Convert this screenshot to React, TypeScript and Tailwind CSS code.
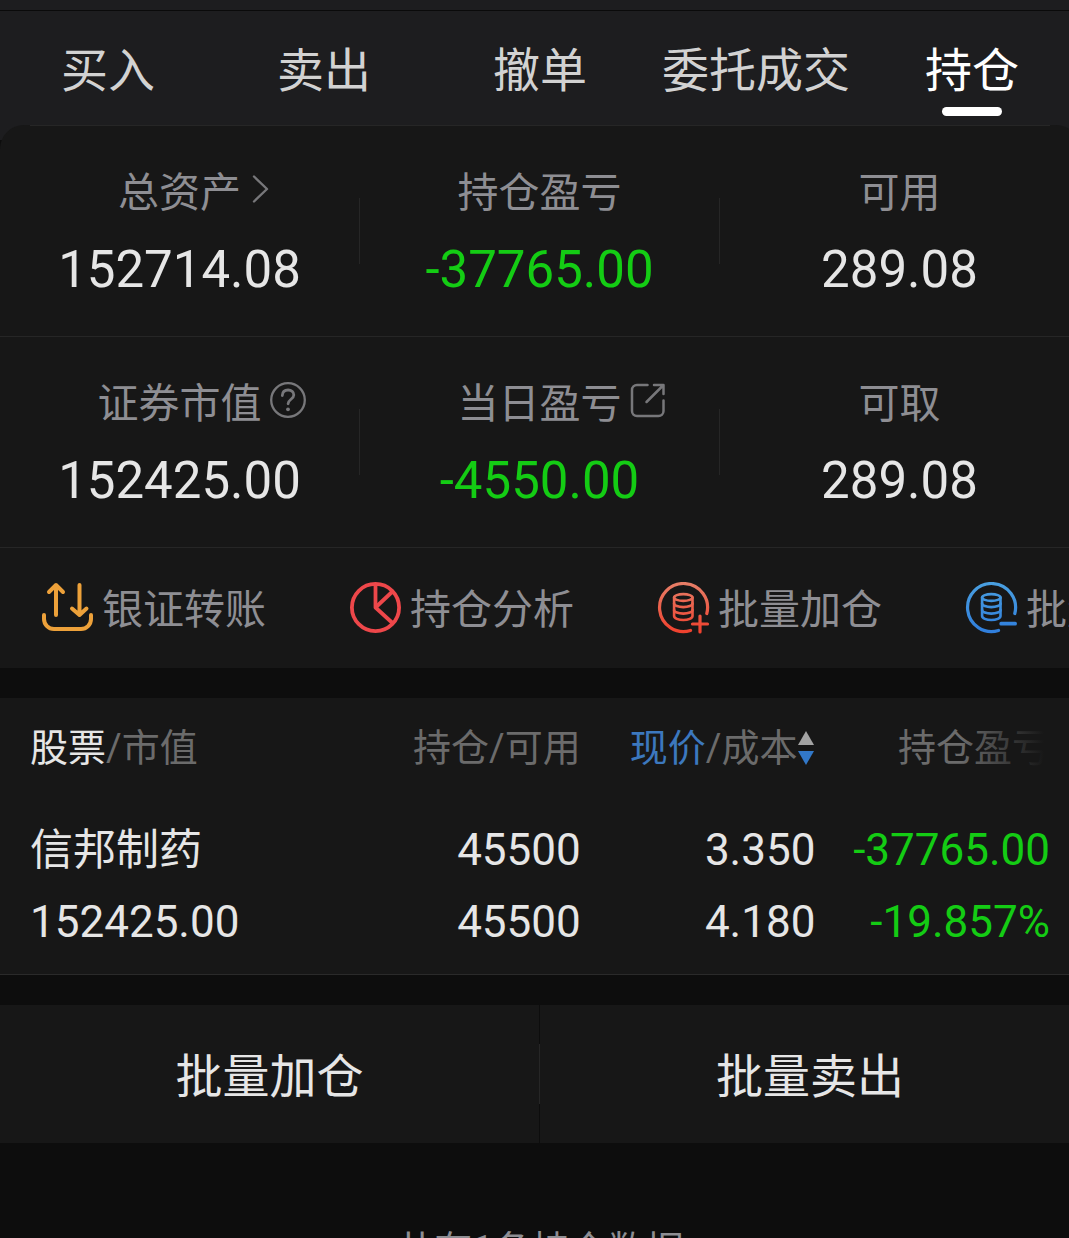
import { useState } from "react";
import type { ReactNode } from "react";

const TABS = ["买入", "卖出", "撤单", "委托成交", "持仓"];

function ChevronIcon() {
  return (
    <svg viewBox="0 0 20 36" className="h-9 w-5" fill="none" stroke="#77777a" strokeWidth="2.4" strokeLinecap="round" strokeLinejoin="round" aria-hidden="true">
      <path d="M5 5.500 18 18 5 30.500" />
    </svg>
  );
}

function HelpIcon() {
  return (
    <svg viewBox="0 0 36 36" className="size-9" fill="none" stroke="#77777a" strokeLinecap="round" aria-hidden="true">
      <circle cx="18" cy="18" r="16.800" strokeWidth="2.300" />
      <path d="M12.300 13.500c.2-3.500 2.600-5.500 5.800-5.500 3.300 0 5.700 2 5.700 5 0 4.200-5.700 4.300-5.700 8.800" strokeWidth="2.800" />
      <circle cx="18" cy="27.300" r="1.900" fill="#77777a" stroke="none" />
    </svg>
  );
}

function ExportIcon() {
  return (
    <svg viewBox="0 0 36 36" className="size-9" fill="none" stroke="#77777a" strokeWidth="2.500" strokeLinecap="round" strokeLinejoin="round" aria-hidden="true">
      <path d="M17.500 3H7a5 5 0 0 0-5 5v21a5 5 0 0 0 5 5h21.500a5 5 0 0 0 5-5V18.500" />
      <path d="M24 3h9.500v9M33 3.500 16.500 20" />
    </svg>
  );
}

function TransferIcon() {
  return (
    <svg viewBox="0 0 53 52" className="h-[52px] w-[53px] shrink-0" fill="none" stroke="#eda13a" strokeWidth="4" strokeLinecap="round" strokeLinejoin="round" aria-hidden="true">
      <path d="M3 33v4a10 10 0 0 0 10 10h27a10 10 0 0 0 10-10v-4" />
      <path d="M15 33V3M8 10l7-7 7 7" />
      <path d="M38.500 3v30M31 26.500l7.500 6.500 7-6.500" />
    </svg>
  );
}

function PieIcon() {
  return (
    <svg viewBox="0 0 53 52" className="h-[52px] w-[53px] shrink-0" fill="none" stroke="#ee474a" strokeWidth="3.800" strokeLinejoin="round" aria-hidden="true">
      <circle cx="26.500" cy="25.500" r="23.600" />
      <path d="M26.500 2v23.500L43.500 41" />
      <path d="M26.500 25.500 43.500 9.500" />
    </svg>
  );
}

function CoinsIcon({ kind }: { kind: "add" | "sell" }) {
  const id = kind === "add" ? "coins-add" : "coins-sell";
  const [top, bottom] = kind === "add" ? ["#e77f68", "#f03f2c"] : ["#4aa0e0", "#2f7ddc"];
  return (
    <svg viewBox="0 0 53 52" className="h-[52px] w-[53px] shrink-0" fill="none" stroke={`url(#${id})`} strokeWidth="3.200" strokeLinecap="round" aria-hidden="true">
      <defs>
        <linearGradient id={id} gradientUnits="userSpaceOnUse" x1="0" y1="0" x2="0" y2="52">
          <stop offset="0" stopColor={top} />
          <stop offset="1" stopColor={bottom} />
        </linearGradient>
      </defs>
      <path d="M49.800 31.500A24 24 0 1 0 33.500 48.500" />
      <g strokeWidth="2.600">
        <ellipse cx="26.300" cy="15.500" rx="9.200" ry="3.400" />
        <path d="M17.100 15.500v18.500c0 2.200 4.100 4 9.200 4s9.200-1.800 9.200-4V15.500" />
        <path d="M17.100 21.500c0 2 4.100 3.600 9.200 3.600s9.200-1.600 9.200-3.600M17.100 28c0 2 4.100 3.600 9.200 3.600s9.200-1.600 9.200-3.600" />
      </g>
      {kind === "add" ? (
        <path d="M35.500 42H50.500M43 34V50" />
      ) : (
        <path d="M36 41.300H50.300V42H36Z" strokeLinejoin="round" />
      )}
    </svg>
  );
}

function SortIcon() {
  return (
    <svg viewBox="0 0 18 36" className="h-9 w-[18px]" aria-hidden="true">
      <path d="M9 1 17 15H1Z" fill="#a3a3a3" />
      <path d="M1 21H17L9 35Z" fill="#3278c8" />
    </svg>
  );
}

type Stat = { label: string; value: string; icon?: ReactNode; loss?: boolean };

const STATS: Stat[][] = [
  [
    { label: "总资产", value: "152714.08", icon: <ChevronIcon /> },
    { label: "持仓盈亏", value: "-37765.00", loss: true },
    { label: "可用", value: "289.08" },
  ],
  [
    { label: "证券市值", value: "152425.00", icon: <HelpIcon /> },
    { label: "当日盈亏", value: "-4550.00", icon: <ExportIcon />, loss: true },
    { label: "可取", value: "289.08" },
  ],
];

function StatCell({ stat, last }: { stat: Stat; last: boolean }) {
  return (
    <div className="flex items-center">
      <div className="flex-1 pt-[34px] pb-[22px]">
        <div className="grid grid-cols-[1fr_auto_1fr] items-center gap-2 text-[41px] leading-[66px] text-[#8e8e93]">
          <span />
          <span>{stat.label}</span>
          {stat.icon ? (
            <button type="button" aria-label={`${stat.label}详情`} className="justify-self-start pb-2">
              {stat.icon}
            </button>
          ) : (
            <span />
          )}
        </div>
        <div className={stat.loss ? "text-center text-[51px] leading-[88px] text-[#14cc14]" : "text-center text-[51px] leading-[88px] text-[#e6e6e6]"}>
          {stat.value}
        </div>
      </div>
      <div className={last ? "w-px" : "h-[66px] w-px bg-[#262626]"} />
    </div>
  );
}

const ACTIONS = [
  { label: "银证转账", icon: <TransferIcon /> },
  { label: "持仓分析", icon: <PieIcon /> },
  { label: "批量加仓", icon: <CoinsIcon kind="add" /> },
  { label: "批量卖出", icon: <CoinsIcon kind="sell" /> },
];

export default function App() {
  const [tab, setTab] = useState("持仓");

  return (
    <div className="h-screen overflow-x-hidden overflow-y-auto bg-[#0d0d0d] font-['Roboto','Noto_Sans_CJK_SC',sans-serif] [scrollbar-width:none]">
      <div className="-mr-[11px]">
        <header className="border-t-[10px] border-[#1d1d1f] bg-[#1d1d1f]">
          <nav className="grid grid-cols-5 border-t border-[#0a0a0a]">
            {TABS.map((name) => (
              <button
                key={name}
                type="button"
                aria-current={tab === name ? "page" : undefined}
                onClick={() => setTab(name)}
                className={
                  tab === name
                    ? "flex flex-col items-center pt-6 pb-[9px] text-[47px] leading-[72px] whitespace-nowrap text-white"
                    : "flex flex-col items-center pt-6 pb-[9px] text-[47px] leading-[72px] whitespace-nowrap text-[#d2d2d2]"
                }
              >
                {name}
                <span className={tab === name ? "h-[9px] w-[60px] rounded-full bg-white" : "h-[9px] w-[60px]"} />
              </button>
            ))}
          </nav>
        </header>

        <main>
          <section className="bg-linear-to-b from-[#1d1d1f] from-[15px] to-[#0d0d0d] to-[15px]">
            <div className="rounded-t-[24px] bg-[#171717]">
              <div className="mx-[30px] h-px bg-[#262626]" />
              {STATS.map((row, i) => (
                <div key={i} className="grid grid-cols-3 border-b border-[#262626]">
                  {row.map((stat, j) => (
                    <StatCell key={stat.label} stat={stat} last={j === 2} />
                  ))}
                </div>
              ))}
              <div className="flex h-[120px] gap-[83px] overflow-hidden pl-[41px]">
                {ACTIONS.map((action) => (
                  <button key={action.label} type="button" className="flex shrink-0 items-center gap-2 text-[41px] leading-[66px] text-[#8e8e93]">
                    {action.icon}
                    <span className="pt-1">{action.label}</span>
                  </button>
                ))}
              </div>
            </div>
          </section>

          <section className="relative mt-[30px] border-b border-[#2a2a2a] bg-[#171717] px-[30px]">
            <table className="w-full table-fixed text-right whitespace-nowrap">
              <colgroup>
                <col className="w-[25%]" />
                <col className="w-[29%]" />
                <col className="w-[23%]" />
                <col className="w-[23%]" />
              </colgroup>
              <thead className="text-[38px] leading-[100px] text-[#6b6b6b]">
                <tr>
                  <th scope="col" className="text-left font-normal">
                    <span className="text-[#e6e6e6]">股票</span>/市值
                  </th>
                  <th scope="col" className="font-normal">持仓/可用</th>
                  <th scope="col" className="font-normal">
                    <button type="button" className="inline-flex items-center align-top">
                      <span className="text-[#3c78be]">现价</span>/成本
                      <SortIcon />
                    </button>
                  </th>
                  <th scope="col" className="font-normal">持仓盈亏</th>
                </tr>
              </thead>
              <tbody className="text-[44px] leading-[72px] text-[#e6e6e6]">
                <tr>
                  <td className="py-4 text-left">
                    <div className="text-[43px]">信邦制药</div>
                    <div>152425.00</div>
                  </td>
                  <td className="py-4">
                    <div>45500</div>
                    <div>45500</div>
                  </td>
                  <td className="py-4">
                    <div>3.350</div>
                    <div>4.180</div>
                  </td>
                  <td className="py-4 text-[#14cc14]">
                    <div>-37765.00</div>
                    <div>-19.857%</div>
                  </td>
                </tr>
              </tbody>
            </table>
            <div className="pointer-events-none absolute top-0 right-0 h-[100px] w-[120px] bg-linear-to-r from-transparent to-[#171717] to-70%" />
          </section>

          <section className="mt-[30px] flex text-[47px] leading-[132px] text-[#e6e6e6]">
            <div className="flex w-1/2 items-center">
              <button type="button" className="flex-1 bg-[#171717] pt-1.5">批量加仓</button>
              <div className="h-[60px] w-px bg-[#262626]" />
            </div>
            <button type="button" className="w-1/2 bg-[#171717] pt-1.5">批量卖出</button>
          </section>
        </main>

        <footer className="pt-[77px] text-center text-[38px] leading-[60px] text-[#8e8e93]">共有1条持仓数据</footer>
      </div>
    </div>
  );
}
